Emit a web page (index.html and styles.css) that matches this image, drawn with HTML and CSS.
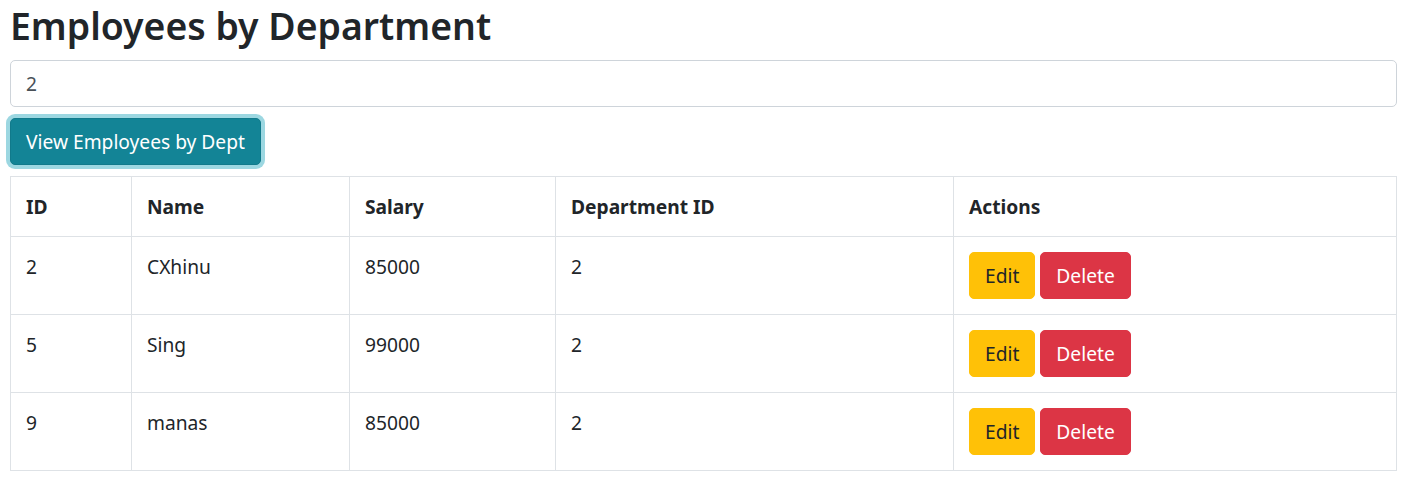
FILE: index.html
```html
<!DOCTYPE html>
<html lang="en">
<head>
<meta charset="utf-8">
<title>Employees by Department</title>
<link rel="stylesheet" href="styles.css">
</head>
<body>
<div class="page">
  <h2 class="title">Employees by Department</h2>
  <input class="field" type="text" value="2">
  <button class="btn btn-info">View Employees by Dept</button>
  <table class="grid">
    <colgroup>
      <col class="c-id"><col class="c-name"><col class="c-salary"><col class="c-dept"><col>
    </colgroup>
    <thead>
      <tr><th>ID</th><th>Name</th><th>Salary</th><th>Department ID</th><th>Actions</th></tr>
    </thead>
    <tbody>
      <tr><td>2</td><td>CXhinu</td><td>85000</td><td>2</td><td><div class="actions"><button class="btn btn-warning">Edit</button><button class="btn btn-danger">Delete</button></div></td></tr>
      <tr><td>5</td><td>Sing</td><td>99000</td><td>2</td><td><div class="actions"><button class="btn btn-warning">Edit</button><button class="btn btn-danger">Delete</button></div></td></tr>
      <tr><td>9</td><td>manas</td><td>85000</td><td>2</td><td><div class="actions"><button class="btn btn-warning">Edit</button><button class="btn btn-danger">Delete</button></div></td></tr>
    </tbody>
  </table>
</div>
</body>
</html>
```

FILE: styles.css
```css
* { box-sizing: border-box; }
html, body { margin: 0; padding: 0; background: #fff; }
body {
  font-family: "Noto Sans", "Open Sans", sans-serif;
  font-size: 19.2px;
  line-height: 30px;
  color: #212529;
}
.page {
  width: 1387px;
  margin-left: 10px;
  padding-top: 2px;
  display: flex;
  flex-direction: column;
  align-items: flex-start;
}
.title {
  margin: 0 0 10px 0;
  font-size: 37.4px;
  line-height: 48px;
  font-weight: 600;
  color: #212529;
}
.field {
  display: block;
  width: 100%;
  height: 47px;
  padding: 7px 15px;
  font-family: inherit;
  font-size: 19.2px;
  line-height: 30px;
  color: #495057;
  background: #fff;
  border: 1px solid #ced4da;
  border-radius: 5px;
  margin: 0 0 11px 0;
  outline: none;
}
.btn {
  display: inline-block;
  height: 47px;
  padding: 7px 15px;
  font-family: inherit;
  font-size: 19.2px;
  line-height: 30px;
  font-weight: 400;
  border: 1px solid transparent;
  border-radius: 5px;
  cursor: pointer;
  white-space: nowrap;
}
.btn-info {
  color: #fff;
  background: #138496;
  border-color: #117a8b;
  box-shadow: 0 0 0 4px rgba(58, 176, 195, 0.5);
  margin-bottom: 11px;
}
.btn-warning { color: #212529; background: #ffc107; border-color: #ffc107; }
.btn-danger { color: #fff; background: #dc3545; border-color: #dc3545; }
.actions { display: flex; gap: 5px; }
.grid {
  width: 100%;
  table-layout: fixed;
  border-collapse: collapse;
  color: #212529;
}
.c-id { width: 121px; }
.c-name { width: 218px; }
.c-salary { width: 206px; }
.c-dept { width: 398px; }
.grid th, .grid td {
  border: 1px solid #dee2e6;
  padding: 15px 15px;
  text-align: left;
  vertical-align: top;
  line-height: 30px;
}
.grid th { font-weight: 700; padding-bottom: 14px; }
```
